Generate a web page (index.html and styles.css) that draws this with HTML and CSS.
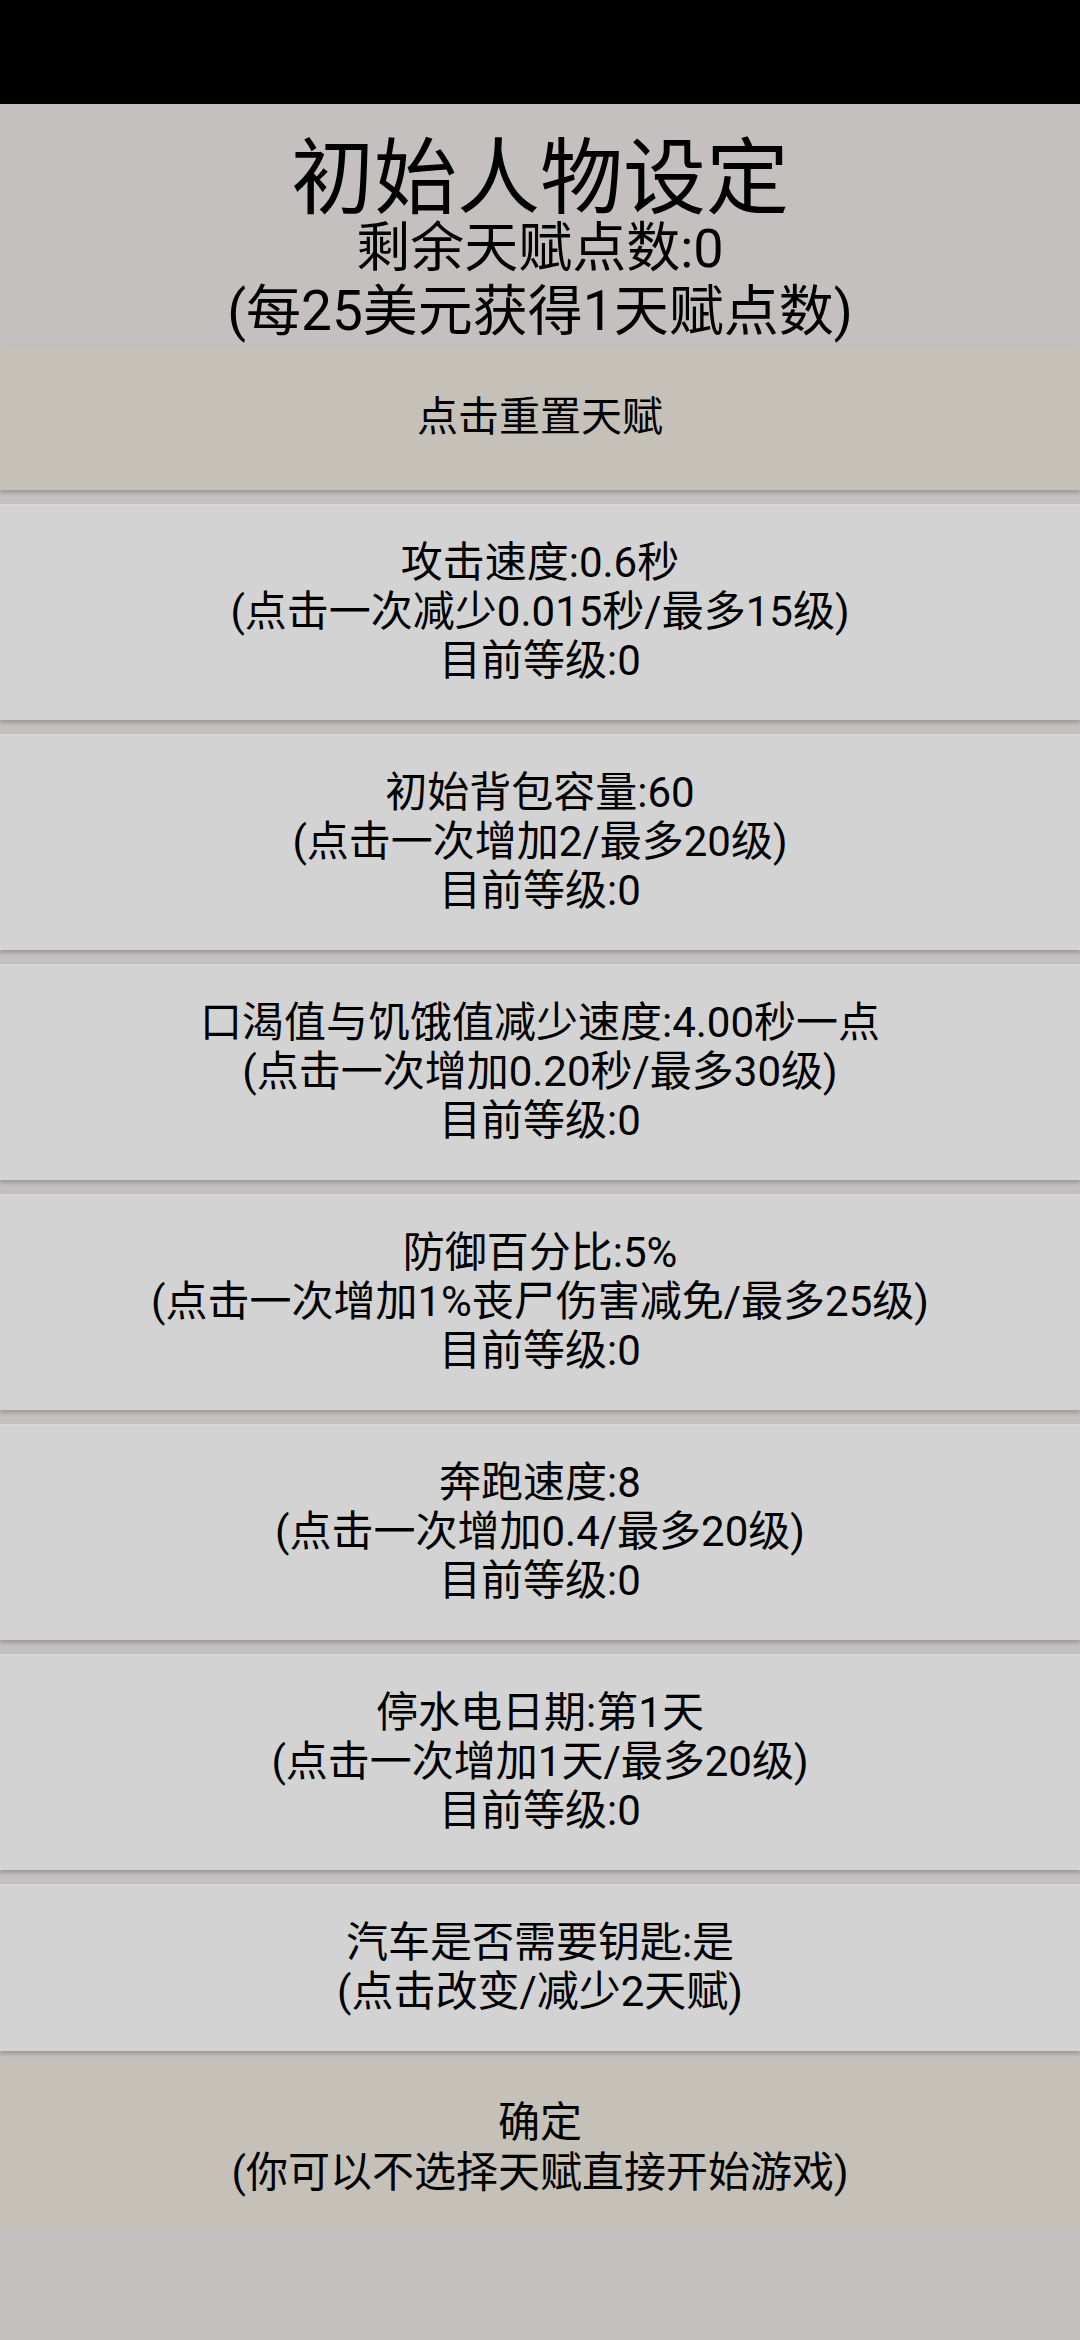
FILE: index.html
```html
<!DOCTYPE html>
<html lang="zh-CN">
<head>
  <meta charset="UTF-8">
  <meta name="viewport" content="width=device-width, initial-scale=1.0">
  <title>初始人物设定</title>
  <link rel="stylesheet" href="styles.css">
</head>
<body>
  <div class="status-bar"></div>

  <header class="intro">
    <h1>初始人物设定</h1>
    <p class="intro-line">剩余天赋点数:0</p>
    <p class="intro-line intro-note">(每25美元获得1天赋点数)</p>
  </header>

  <main class="talent-list">
    <button class="reset">点击重置天赋</button>

    <button class="talent">
      <span>攻击速度:0.6秒</span>
      <span>(点击一次减少0.015秒/最多15级)</span>
      <span>目前等级:0</span>
    </button>

    <button class="talent">
      <span>初始背包容量:60</span>
      <span>(点击一次增加2/最多20级)</span>
      <span>目前等级:0</span>
    </button>

    <button class="talent">
      <span>口渴值与饥饿值减少速度:4.00秒一点</span>
      <span>(点击一次增加0.20秒/最多30级)</span>
      <span>目前等级:0</span>
    </button>

    <button class="talent">
      <span>防御百分比:5%</span>
      <span>(点击一次增加1%丧尸伤害减免/最多25级)</span>
      <span>目前等级:0</span>
    </button>

    <button class="talent">
      <span>奔跑速度:8</span>
      <span>(点击一次增加0.4/最多20级)</span>
      <span>目前等级:0</span>
    </button>

    <button class="talent">
      <span>停水电日期:第1天</span>
      <span>(点击一次增加1天/最多20级)</span>
      <span>目前等级:0</span>
    </button>

    <button class="talent">
      <span>汽车是否需要钥匙:是</span>
      <span>(点击改变/减少2天赋)</span>
    </button>

    <button class="confirm">
      <span>确定</span>
      <span>(你可以不选择天赋直接开始游戏)</span>
    </button>
  </main>
</body>
</html>
```

FILE: styles.css
```css
body {
  margin: 0;
  background-color: #c5c0c0;
  color: #000;
  font-family: Roboto, "Noto Sans CJK SC", sans-serif;
}
.status-bar {
  height: 104px;
  background-color: #000;
}
.intro {
  text-align: center;
  padding: 36px 0 3px;
}
.intro h1 {
  margin: 0;
  font-size: 83px;
  line-height: 78px;
  font-weight: 400;
}
.intro-line {
  margin: 0;
  font-size: 54px;
  line-height: 62px;
}
.intro-note {
  font-size: 55px;
}
.talent-list {
  display: flex;
  flex-direction: column;
  gap: 14px;
}
.reset,
.talent,
.confirm {
  display: flex;
  flex-direction: column;
  align-items: center;
  justify-content: center;
  width: 100%;
  margin: 0;
  border: none;
  border-radius: 0;
  color: #000;
  font-family: inherit;
  font-size: 42px;
  line-height: 49px;
  text-align: center;
  cursor: pointer;
  position: relative;
  box-shadow: 0 3px 4px rgba(0, 0, 0, 0.2), inset 0 2px 0 rgba(255, 255, 255, 0.12);
}
.reset {
  height: 145px;
  font-size: 41px;
  background-color: #c5c1b9;
  box-shadow: 0 3px 4px rgba(0, 0, 0, 0.2);
}
.talent {
  padding: 34px 0 35px;
  background-color: #d3d3d3;
}
.confirm {
  padding: 33px 0;
  line-height: 50px;
  background-color: #c5c1b9;
  box-shadow: none;
}
```
